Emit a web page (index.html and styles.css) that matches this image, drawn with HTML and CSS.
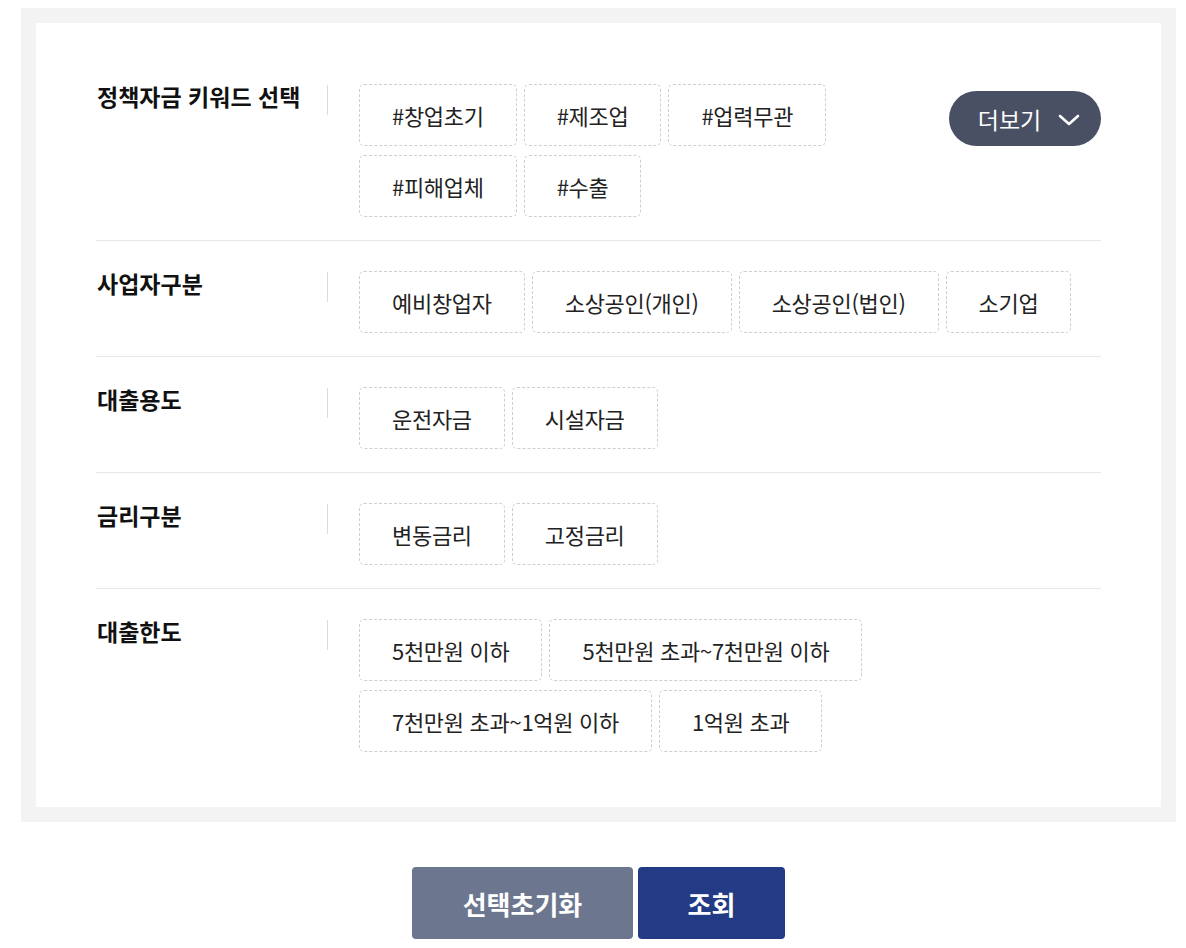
FILE: index.html
```html
<!DOCTYPE html>
<html lang="ko">
<head>
<meta charset="utf-8">
<title>정책자금 검색</title>
<link rel="stylesheet" href="styles.css">
</head>
<body>
<div class="page">
  <div class="filter-box">
    <div class="filter-inner">
      <div class="row">
        <div class="label">정책자금 키워드 선택</div>
        <div class="tags">
          <span class="tag">#창업초기</span>
          <span class="tag">#제조업</span>
          <span class="tag">#업력무관</span>
          <span class="tag">#피해업체</span>
          <span class="tag">#수출</span>
        </div>
        <button class="more">더보기
          <svg width="22" height="12" viewBox="0 0 22 12"><path d="M2 2 L11 10 L20 2" fill="none" stroke="#fff" stroke-width="2.6" stroke-linecap="round" stroke-linejoin="round"/></svg>
        </button>
      </div>
      <div class="row">
        <div class="label">사업자구분</div>
        <div class="tags">
          <span class="tag">예비창업자</span>
          <span class="tag">소상공인(개인)</span>
          <span class="tag">소상공인(법인)</span>
          <span class="tag">소기업</span>
        </div>
      </div>
      <div class="row">
        <div class="label">대출용도</div>
        <div class="tags">
          <span class="tag">운전자금</span>
          <span class="tag">시설자금</span>
        </div>
      </div>
      <div class="row">
        <div class="label">금리구분</div>
        <div class="tags">
          <span class="tag">변동금리</span>
          <span class="tag">고정금리</span>
        </div>
      </div>
      <div class="row">
        <div class="label">대출한도</div>
        <div class="tags">
          <span class="tag">5천만원 이하</span>
          <span class="tag">5천만원 초과~7천만원 이하</span>
          <span class="tag">7천만원 초과~1억원 이하</span>
          <span class="tag">1억원 초과</span>
        </div>
      </div>
    </div>
  </div>
  <div class="actions">
    <button class="btn btn-reset">선택초기화</button>
    <button class="btn btn-search">조회</button>
  </div>
</div>
</body>
</html>
```
FILE: styles.css
```css
* { box-sizing: border-box; }
html, body { margin: 0; padding: 0; background: #fff; }
body {
  font-family: "Noto Sans CJK KR", "Noto Sans", sans-serif;
  color: #222;
}
.page {
  padding: 8px 10px 0 21px;
}
.filter-box {
  background: #f3f3f3;
  padding: 15px;
}
.filter-inner {
  background: #fff;
  padding: 31px 60px 32px;
}
.row {
  display: flex;
  align-items: flex-start;
  padding: 30px 0 23px;
  border-top: 1px solid #e8e8e8;
}
.row:first-child {
  border-top: none;
}
.label {
  width: 232px;
  flex: 0 0 232px;
  font-size: 23px;
  font-weight: 700;
  line-height: 22px;
  padding: 0 0 8px 1px;
  color: #111;
  border-right: 1px solid #dcdcdc;
  margin-top: 1px;
  white-space: nowrap;
}
.tags {
  flex: 1;
  display: flex;
  flex-wrap: wrap;
  gap: 9px 7px;
  margin-left: 31px;
}
.row:first-child .tags { margin-right: 110px; }
.tag {
  display: inline-flex;
  align-items: center;
  height: 62px;
  padding: 0 32px;
  border: 1px dashed #cfcfcf;
  border-radius: 5px;
  font-size: 22px;
  letter-spacing: -0.3px;
  color: #222;
  white-space: nowrap;
}
.more {
  flex: 0 0 auto;
  width: 152px;
  height: 55px;
  margin-top: 7px;
  border: none;
  border-radius: 28px;
  background: #4a5064;
  color: #fff;
  font-family: inherit;
  font-size: 23px;
  display: flex;
  align-items: center;
  justify-content: center;
  gap: 17px;
  padding: 0 0 0 8px;
}
.more svg { display: block; margin-top: 2px; }
.actions {
  display: flex;
  justify-content: center;
  gap: 5px;
  margin-top: 45px;
}
.btn {
  height: 72px;
  border: none;
  border-radius: 4px;
  color: #fff;
  font-family: inherit;
  font-size: 26px;
  font-weight: 700;
}
.btn-reset { width: 221px; background: #6c778f; }
.btn-search { width: 147px; background: #233b85; }
```
